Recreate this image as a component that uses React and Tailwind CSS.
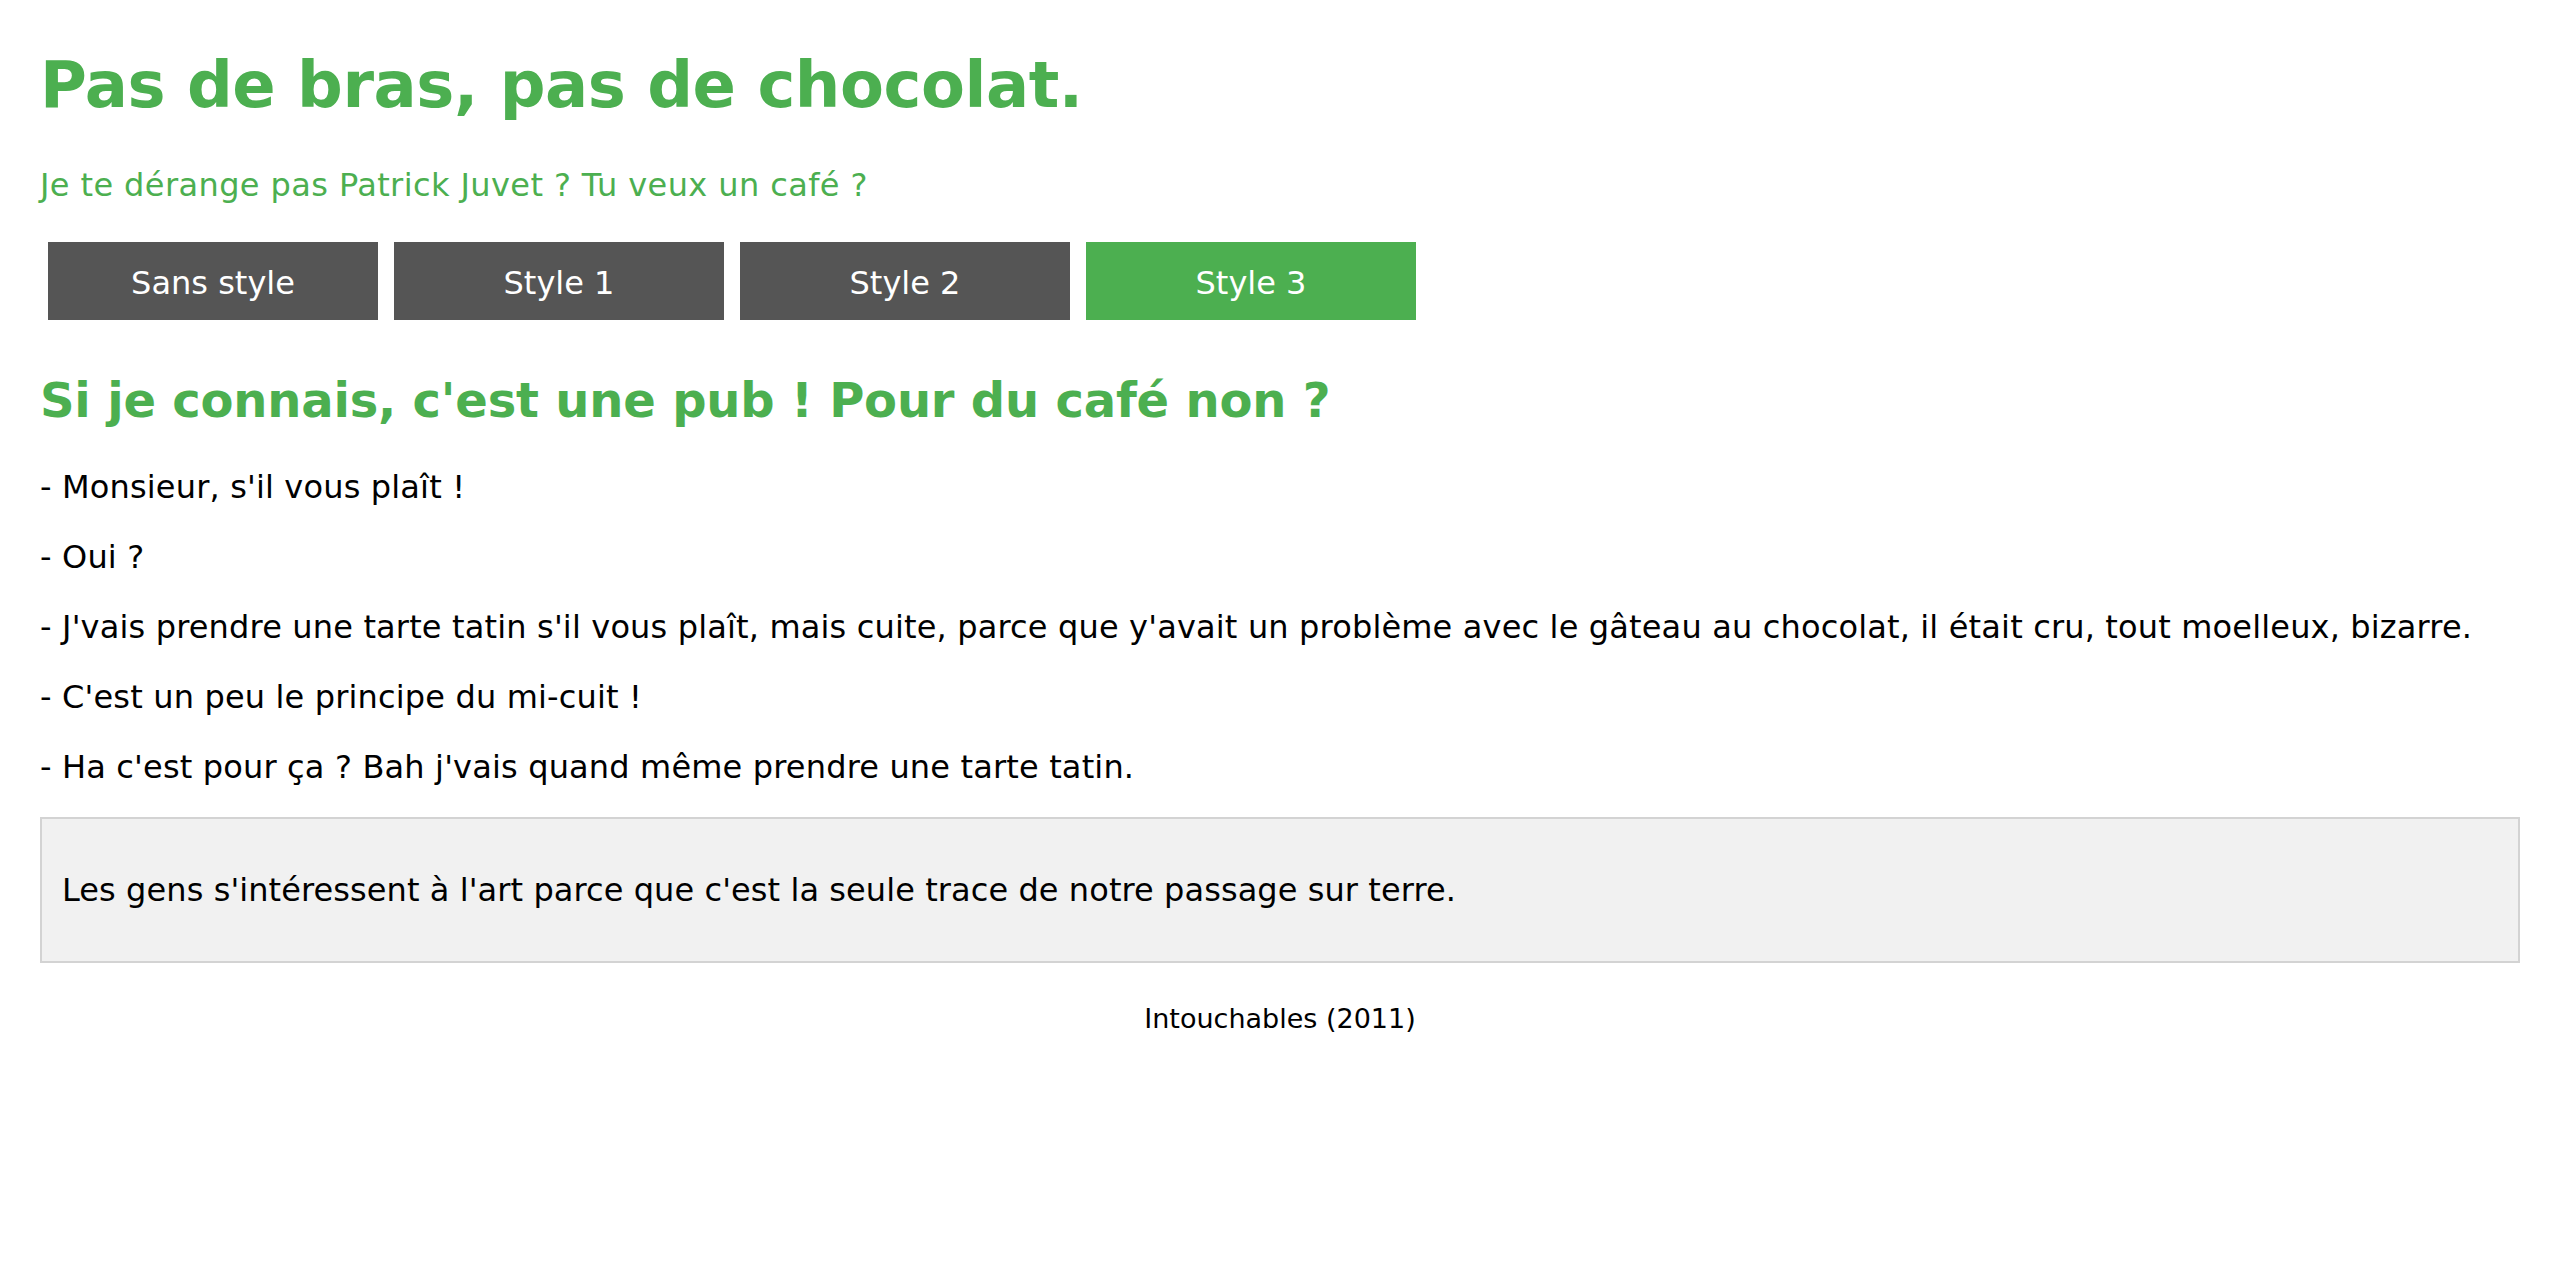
export default function App() {
  const buttons = ["Sans style", "Style 1", "Style 2", "Style 3"];
  const lines = [
    "- Monsieur, s'il vous plaît !",
    "- Oui ?",
    "- J'vais prendre une tarte tatin s'il vous plaît, mais cuite, parce que y'avait un problème avec le gâteau au chocolat, il était cru, tout moelleux, bizarre.",
    "- C'est un peu le principe du mi-cuit !",
    "- Ha c'est pour ça ? Bah j'vais quand même prendre une tarte tatin.",
  ];
  return (
    <div className="min-h-[1272px] bg-white px-[40px] pt-[48px] text-black font-['DejaVu_Sans',Verdana,sans-serif]">
      <h1 className="text-[64px] font-bold leading-[74px] tracking-[-0.45px] text-[#4caf50]">Pas de bras, pas de chocolat.</h1>
      <p className="mt-[44px] text-[32px] leading-[38px] tracking-[0.4px] text-[#4caf50]">Je te dérange pas Patrick Juvet ? Tu veux un café ?</p>
      <div className="mt-[38px] ml-[8px] flex gap-[16px]">
        {buttons.map((b, i) => (
          <div
            key={b}
            className={`w-[330px] h-[78px] pt-[4px] text-center text-[32px] leading-[74px] text-white ${i === 3 ? "bg-[#4caf50]" : "bg-[#555555]"}`}
          >
            {b}
          </div>
        ))}
      </div>
      <h2 className="mt-[52px] text-[48px] font-bold leading-[56px] tracking-[-0.2px] text-[#4caf50]">Si je connais, c'est une pub ! Pour du café non ?</h2>
      <div className="mt-[40px] flex flex-col gap-[32px]">
        {lines.map((l) => (
          <p key={l} className="text-[32px] leading-[38px] tracking-[0.16px]">{l}</p>
        ))}
      </div>
      <div className="mt-[31px] border-2 border-[#d3d3d3] bg-[#f1f1f1] px-[20px] py-[52px]">
        <p className="text-[32px] leading-[38px] tracking-[0.08px]">Les gens s'intéressent à l'art parce que c'est la seule trace de notre passage sur terre.</p>
      </div>
      <p className="mt-[40px] text-center text-[27px] leading-[32px]">Intouchables (2011)</p>
    </div>
  );
}
